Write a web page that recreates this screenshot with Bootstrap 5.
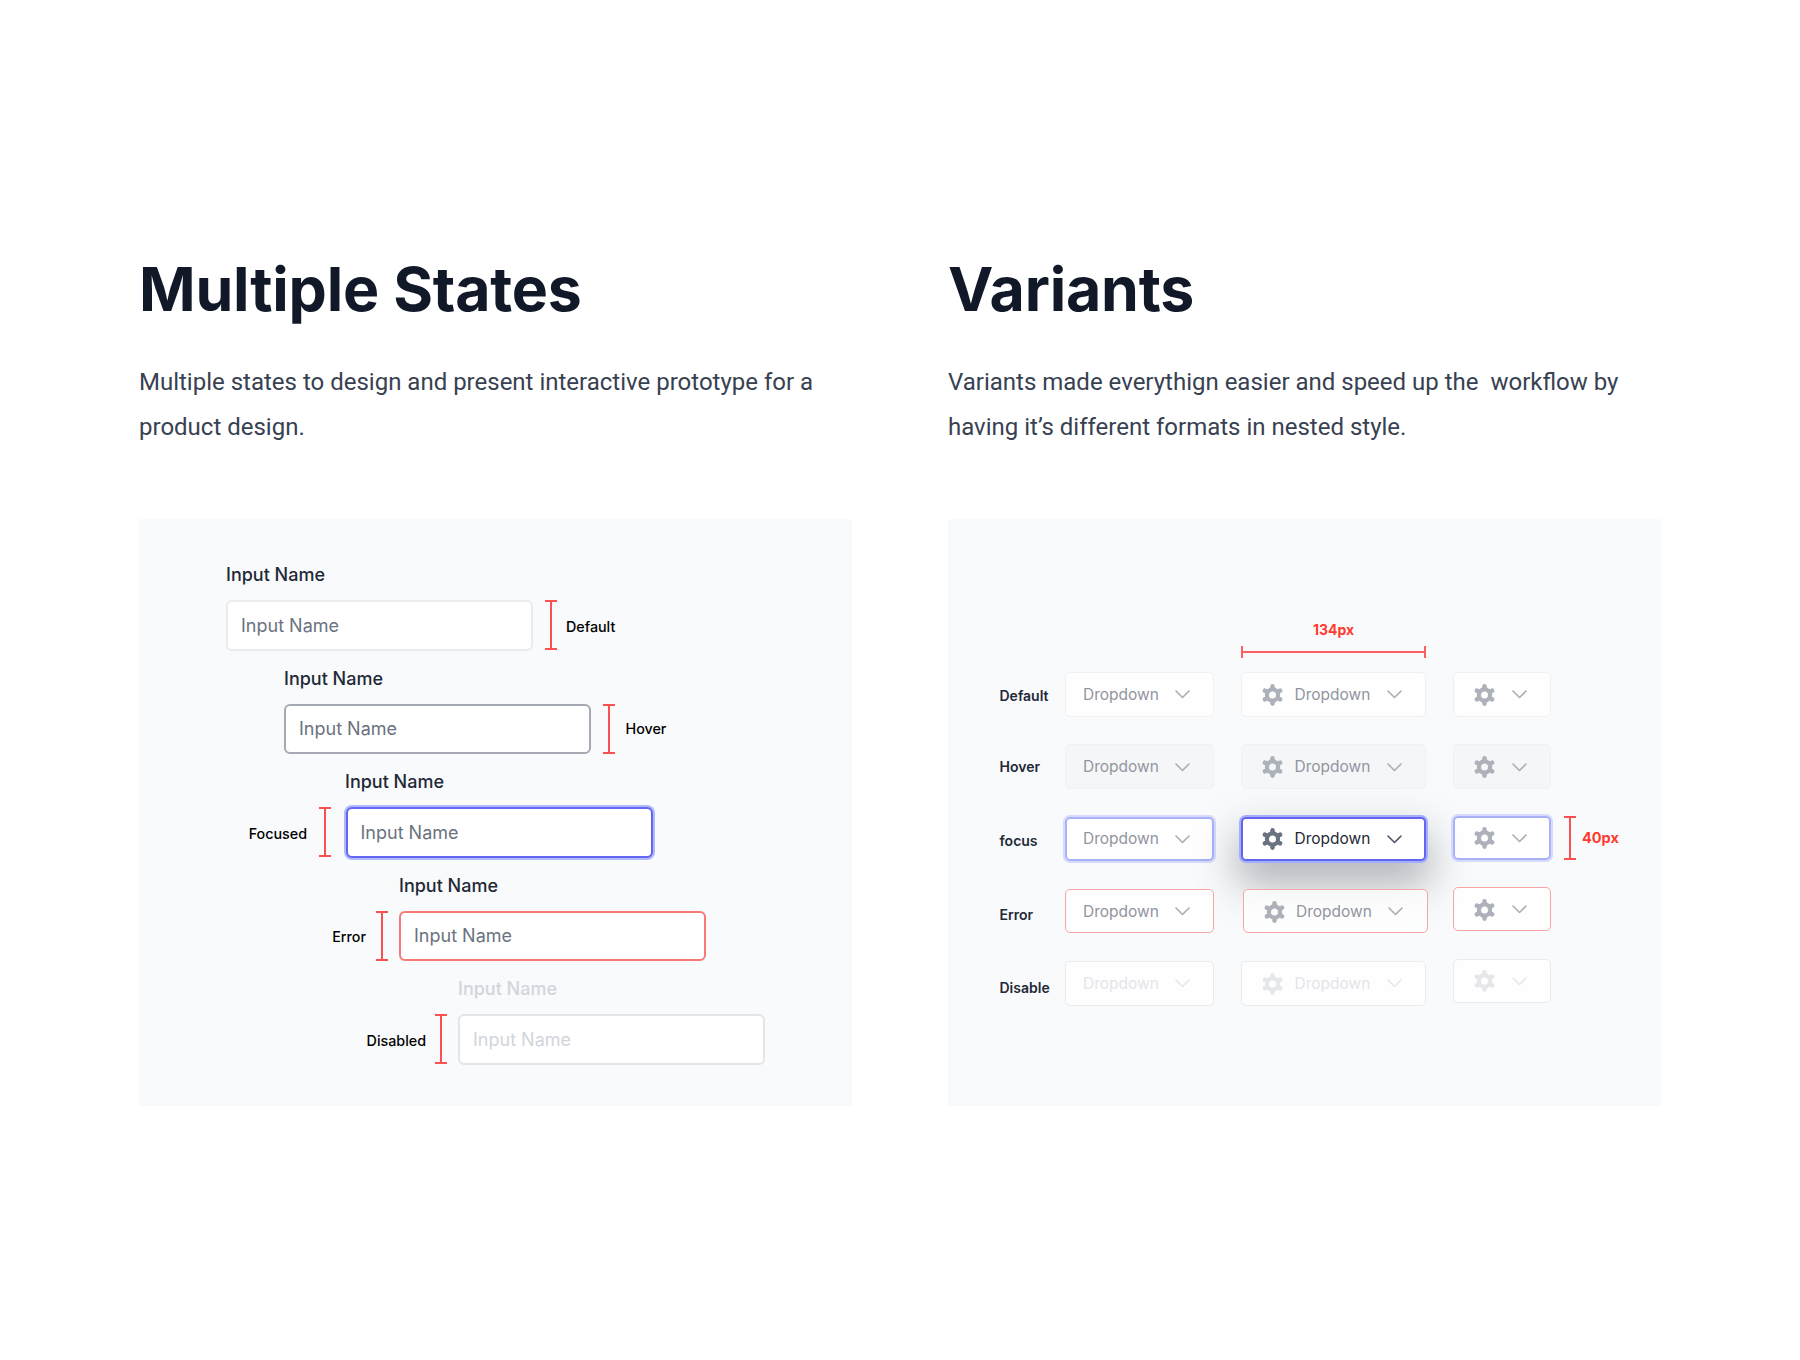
<!DOCTYPE html>
<html lang="en">
<head>
<meta charset="utf-8">
<title>Multiple States and Variants</title>
<link href="https://cdn.jsdelivr.net/npm/bootstrap@5.3.0/dist/css/bootstrap.min.css" rel="stylesheet">
<style>
body{background:#fff;font-family:Inter,"Liberation Sans",sans-serif;}
.sheet{padding:253px 0 0 139px;gap:96px;}
.sheet-col{width:713px;}
.big-title{font:700 60.8px/72px Inter,sans-serif;color:#111827;margin:0 0 35px;letter-spacing:-.2px;}
.intro{font:400 24px/45px Roboto,sans-serif;color:#374151;margin:0 0 69px;height:90px;}
.stage{background:#f9fafb;height:587px;}
.stage-states{padding-top:44px;}
.stage-variants{padding:102px 0 0 51.5px;}
.state-label{font:500 18px/24px Inter,sans-serif;color:#1f2937;margin:0 0 13px;display:block;}
.state-row{margin-bottom:16px;}
.state-input.form-control{width:307px;height:50.5px;flex:none;font:400 18px/24px Inter,sans-serif;padding:0 13px;border-radius:6px;border:2px solid #e9ebee;background:#fff;box-shadow:none;}
.state-input::placeholder{color:#6b7280;opacity:1;}
.is-hover.form-control{border-color:#a4a9b3;}
.is-focus.form-control{border-color:#6366f1;box-shadow:0 0 0 2px #b0b9fb;}
.is-error.form-control{border-color:#f97878;}
.is-off.form-control{border-color:#e3e5e9;background:#fff;}
.is-off::placeholder{color:#d1d5db;}
.lab-off{color:#d1d5db;}
.note{font:500 14.3px/18px Inter,sans-serif;color:#000;white-space:nowrap;margin-top:3px;}
.note-flat{margin-top:1px;}
.note-r{margin-left:9px;}
.note-r-wide{margin-left:10.5px;}
.note-l{margin-right:10px;}
.note-l-wide{margin-right:11.5px;}
.note-l-tight{margin-right:9px;}
.vrule{width:12px;height:50px;flex:none;background:linear-gradient(#fb5050,#fb5050) center/2px 100% no-repeat,linear-gradient(#fb5050,#fb5050) top/100% 2px no-repeat,linear-gradient(#fb5050,#fb5050) bottom/100% 2px no-repeat;}
.vrule-sm{height:44px;}
.rule-r{margin-left:12px;}
.rule-l{margin-right:11px;}
.rule-lg{margin-right:15px;}
.hrule{width:185px;height:12px;background:linear-gradient(#fb5f5f,#fb5f5f) center/100% 2px no-repeat,linear-gradient(#fb5f5f,#fb5f5f) left/2px 100% no-repeat,linear-gradient(#fb5f5f,#fb5f5f) right/2px 100% no-repeat;}
.measure{font:700 14px/18px Inter,sans-serif;color:#ff3b30;}
.w-default{margin-left:87px;}
.lab-hover{margin-left:145px;} .w-hover{margin-left:145px;}
.lab-focus{margin-left:206px;} .w-focus{width:513.5px;}
.lab-error{margin-left:260px;} .w-error{width:567px;}
.lab-off{margin-left:319px;} .w-off{width:626px;}
.top-measure{margin-left:241.5px;margin-bottom:14px;width:185px;}
.top-measure .hrule{margin-top:7px;}
.v-row{margin-bottom:27.8px;height:44.5px;}
.v-name{width:65.5px;flex:none;font:600 14px/18px Inter,sans-serif;color:#1f2937;}
.name-hover{margin-top:1px;}
.name-down{margin-top:3px;}
.name-more{margin-top:5px;}
.name-err{margin-top:7px;}
.name-most{margin-top:9px;}
.drop.btn{display:flex;align-items:center;height:44.5px;flex:none;padding:1px 0 0;border:1.5px solid #eef0f3;border-radius:5px;background:rgba(255,255,255,.75);color:#91959f;font:400 15.5px/20px Inter,sans-serif;}
.drop-wide{width:149px;padding-left:17px!important;gap:16px;}
.drop-icon{width:185px;margin-left:27px;padding-left:20px!important;gap:11.5px;}
.drop-icon .chev{margin-left:5px;}
.drop-mini{width:98px;margin-left:27px;padding-left:20px!important;gap:17px;}
.drop .cog{width:21px;height:22px;color:#adb1ba;flex:none;}
.drop .chev{width:15px;height:9px;color:#a9adb6;flex:none;}
.drop.st-hover{background:#f5f6f8;border-color:#f0f1f4;}
.drop.st-focus{background:rgba(255,255,255,.8);border:2px solid #a9b1fb;box-shadow:0 0 0 2px #d6dafc;}
.drop-wide.st-focus{padding-left:16px!important;}
.drop-mini.st-focus,.drop-icon.st-active{padding-left:19px!important;}
.drop.st-active{background:#fff;border:2px solid #6366f1;color:#1f2937;box-shadow:0 0 0 2px #a5aefc,0 20px 40px 4px rgba(31,41,55,.34);}
.st-active .cog{color:#6b7280;}
.st-active .chev{color:#4b5563;}
.drop.st-error{border-color:#f8a5a5;}
.drop.st-off{color:#e3e5ea;border-color:#e9ebef;opacity:1;}
.st-off .cog,.st-off .chev{color:#e5e7eb;}
.nudge-r{margin-left:28.5px;margin-right:-1.5px;}
.raise-1{margin-top:-1px;}
.raise-2{margin-top:-2px;}
.raise-3{margin-top:-2.5px;}
.note-40{margin-left:13px;gap:6px;margin-top:-1px;}
.measure-40{font-size:14.5px;}
</style>
</head>
<body>
<svg width="0" height="0" class="d-block" aria-hidden="true">
  <symbol id="cog" viewBox="0 0 21 22">
    <circle cx="10.5" cy="11" r="5.6" fill="none" stroke="currentColor" stroke-width="4.2"/>
    <g stroke="currentColor" stroke-width="4.6" stroke-linecap="round">
      <path d="M10.5 3.2V2.4"/><path d="M10.5 18.8v.8"/>
      <path d="M3.7 7.1 3 6.7"/><path d="M17.3 7.1l.7-.4"/>
      <path d="M3.7 14.9 3 15.3"/><path d="M17.3 14.9l.7.4"/>
    </g>
  </symbol>
  <symbol id="chev" viewBox="0 0 15 9">
    <path d="M1 1l6.5 6.5L14 1" fill="none" stroke="currentColor" stroke-width="1.6" stroke-linecap="round" stroke-linejoin="round"/>
  </symbol>
</svg>
<main class="sheet d-flex">
  <section class="sheet-col">
    <h1 class="big-title">Multiple States</h1>
    <p class="intro">Multiple states to design and present interactive prototype for a product design.</p>
    <div class="stage stage-states">
      <label class="state-label w-default">Input Name</label>
      <div class="state-row w-default d-flex align-items-center">
        <input class="form-control state-input" placeholder="Input Name">
        <span class="vrule rule-r"></span><span class="note note-r">Default</span>
      </div>
      <label class="state-label lab-hover">Input Name</label>
      <div class="state-row w-hover d-flex align-items-center">
        <input class="form-control state-input is-hover" placeholder="Input Name">
        <span class="vrule rule-r"></span><span class="note note-flat note-r-wide">Hover</span>
      </div>
      <label class="state-label lab-focus">Input Name</label>
      <div class="state-row w-focus d-flex align-items-center justify-content-end">
        <span class="note note-l-wide">Focused</span><span class="vrule rule-lg"></span>
        <input class="form-control state-input is-focus" placeholder="Input Name">
      </div>
      <label class="state-label lab-error">Input Name</label>
      <div class="state-row w-error d-flex align-items-center justify-content-end">
        <span class="note note-l">Error</span><span class="vrule rule-l"></span>
        <input class="form-control state-input is-error" placeholder="Input Name">
      </div>
      <label class="state-label lab-off">Input Name</label>
      <div class="state-row w-off d-flex align-items-center justify-content-end">
        <span class="note note-l-tight">Disabled</span><span class="vrule rule-l"></span>
        <input class="form-control state-input is-off" placeholder="Input Name" disabled>
      </div>
    </div>
  </section>
  <section class="sheet-col">
    <h1 class="big-title">Variants</h1>
    <p class="intro">Variants made everythign easier and speed up the&nbsp; workflow by having it’s different formats in nested style.</p>
    <div class="stage stage-variants">
      <div class="top-measure text-center">
        <div class="measure">134px</div>
        <div class="hrule"></div>
      </div>
      <div class="v-row d-flex align-items-start">
        <span class="v-name name-down align-self-center">Default</span>
        <button class="btn drop drop-wide" type="button">Dropdown<svg class="chev"><use href="#chev"/></svg></button>
        <button class="btn drop drop-icon" type="button"><svg class="cog"><use href="#cog"/></svg>Dropdown<svg class="chev"><use href="#chev"/></svg></button>
        <button class="btn drop drop-mini" type="button" aria-label="Settings"><svg class="cog"><use href="#cog"/></svg><svg class="chev"><use href="#chev"/></svg></button>
      </div>
      <div class="v-row d-flex align-items-start">
        <span class="v-name name-hover align-self-center">Hover</span>
        <button class="btn drop drop-wide st-hover" type="button">Dropdown<svg class="chev"><use href="#chev"/></svg></button>
        <button class="btn drop drop-icon st-hover" type="button"><svg class="cog"><use href="#cog"/></svg>Dropdown<svg class="chev"><use href="#chev"/></svg></button>
        <button class="btn drop drop-mini st-hover" type="button" aria-label="Settings"><svg class="cog"><use href="#cog"/></svg><svg class="chev"><use href="#chev"/></svg></button>
      </div>
      <div class="v-row d-flex align-items-start">
        <span class="v-name name-more align-self-center">focus</span>
        <button class="btn drop drop-wide st-focus" type="button">Dropdown<svg class="chev"><use href="#chev"/></svg></button>
        <button class="btn drop drop-icon st-active" type="button"><svg class="cog"><use href="#cog"/></svg>Dropdown<svg class="chev"><use href="#chev"/></svg></button>
        <button class="btn drop drop-mini st-focus raise-1" type="button" aria-label="Settings"><svg class="cog"><use href="#cog"/></svg><svg class="chev"><use href="#chev"/></svg></button>
        <div class="note-40 d-flex align-items-center"><span class="vrule vrule-sm"></span><span class="measure measure-40">40px</span></div>
      </div>
      <div class="v-row d-flex align-items-start">
        <span class="v-name name-err align-self-center">Error</span>
        <button class="btn drop drop-wide st-error" type="button">Dropdown<svg class="chev"><use href="#chev"/></svg></button>
        <button class="btn drop drop-icon st-error nudge-r" type="button"><svg class="cog"><use href="#cog"/></svg>Dropdown<svg class="chev"><use href="#chev"/></svg></button>
        <button class="btn drop drop-mini st-error raise-2" type="button" aria-label="Settings"><svg class="cog"><use href="#cog"/></svg><svg class="chev"><use href="#chev"/></svg></button>
      </div>
      <div class="v-row d-flex align-items-start">
        <span class="v-name name-most align-self-center">Disable</span>
        <button class="btn drop drop-wide st-off" type="button">Dropdown<svg class="chev"><use href="#chev"/></svg></button>
        <button class="btn drop drop-icon st-off" type="button"><svg class="cog"><use href="#cog"/></svg>Dropdown<svg class="chev"><use href="#chev"/></svg></button>
        <button class="btn drop drop-mini st-off raise-3" type="button" aria-label="Settings"><svg class="cog"><use href="#cog"/></svg><svg class="chev"><use href="#chev"/></svg></button>
      </div>
    </div>
  </section>
</main>
<script src="https://cdn.jsdelivr.net/npm/bootstrap@5.3.0/dist/js/bootstrap.bundle.min.js"></script>
</body>
</html>
